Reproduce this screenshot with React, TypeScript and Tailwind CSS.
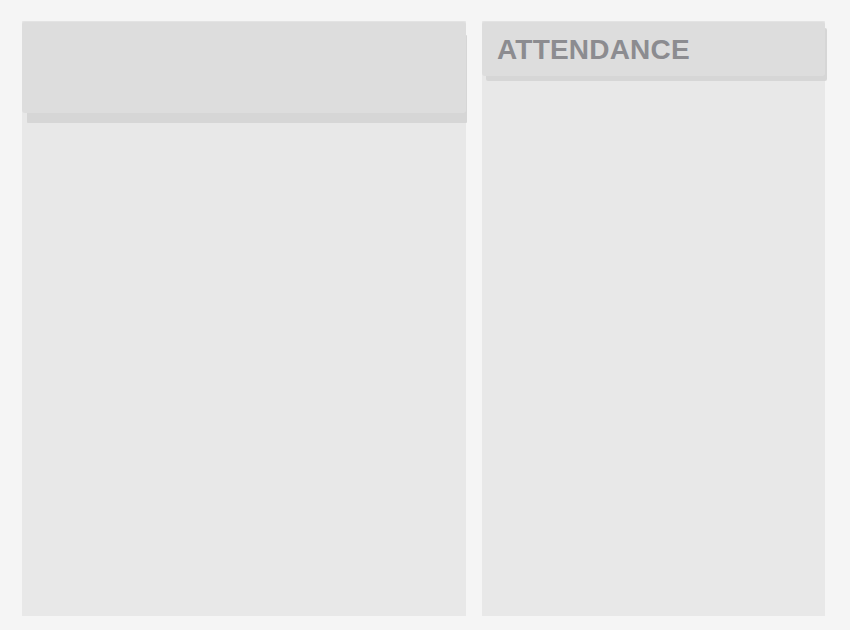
export default function App() {
    return (
        <div className="w-[850px] h-[630px] bg-[#f5f5f5] flex gap-4 pl-[22px] pt-[21px] pb-[14px] font-['Liberation_Sans',Arial,sans-serif]">
            <section className="w-[444px] h-full bg-[#e8e8e8]">
                <div className="h-[92px] bg-[#dddddd] rounded-[3px] border-t border-[#e3e3e3] shadow-[3px_12px_0_-2px_#d6d6d6]"></div>
            </section>

            <section className="w-[343px] h-full bg-[#e8e8e8]">
                <div className="h-[55px] bg-[#dddddd] rounded-[3px] border-t border-[#e3e3e3] shadow-[3px_6px_0_-1px_#d6d6d6] flex items-center pl-[15px] pt-[2px]">
                    <h2 className="text-[28px] leading-none font-bold text-[#8c8c90] tracking-[0.2px]">ATTENDANCE</h2>
                </div>
            </section>
        </div>
    );
}
